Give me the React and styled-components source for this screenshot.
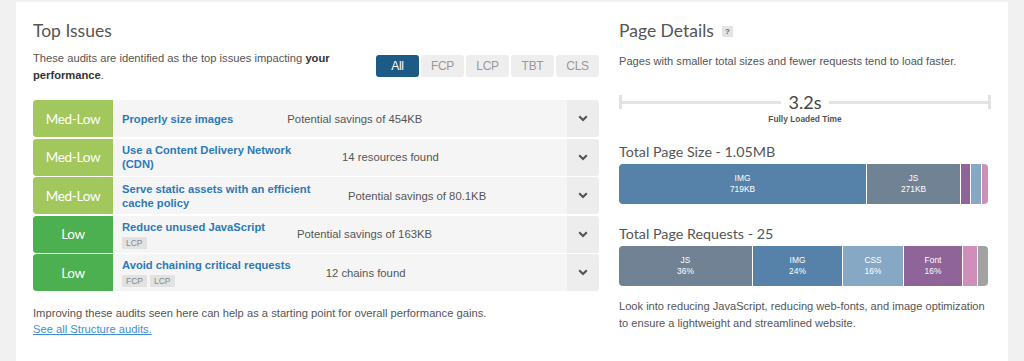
import React from "react";
import styled, { createGlobalStyle } from "styled-components";

const GlobalStyle = createGlobalStyle`
  html, body {
    margin: 0;
    padding: 0;
    background: #f1f1f1;
    font-family: "Liberation Sans", Arial, sans-serif;
  }
`;

const issues = [
  { level: "Med-Low", title: "Properly size images", meta: "Potential savings of 454KB", pad: 54 },
  { level: "Med-Low", title: "Use a Content Delivery Network (CDN)", meta: "14 resources found", pad: 24 },
  { level: "Med-Low", title: "Serve static assets with an efficient cache policy", meta: "Potential savings of 80.1KB", pad: 30 },
  { level: "Low", title: "Reduce unused JavaScript", meta: "Potential savings of 163KB", tags: ["LCP"], pad: 32 },
  { level: "Low", title: "Avoid chaining critical requests", meta: "12 chains found", tags: ["FCP", "LCP"], pad: 35 },
];

const filters = ["All", "FCP", "LCP", "TBT", "CLS"];

const sizeParts = [
  { w: 247, color: "#5681a9", label: "IMG", value: "719KB" },
  { w: 93, color: "#718294", label: "JS", value: "271KB" },
  { w: 9, color: "#8e6499" },
  { w: 10, color: "#87a8c5" },
  { w: 10, color: "#d08fbb" },
];

const requestParts = [
  { w: 133, color: "#718294", label: "JS", value: "36%" },
  { w: 89, color: "#5681a9", label: "IMG", value: "24%" },
  { w: 60, color: "#87a8c5", label: "CSS", value: "16%" },
  { w: 58, color: "#8e6499", label: "Font", value: "16%" },
  { w: 14, color: "#d08fbb" },
  { w: 15, color: "#a2a2a2" },
];

const Chevron = () => (
  <svg width="10" height="7" viewBox="0 0 10 7">
    <path d="M1.2 1.3 L5 5 L8.8 1.3" fill="none" stroke="#555" strokeWidth="2.2" />
  </svg>
);

const StackBar = ({ parts }) => (
  <Bar>
    {parts.map((p, i) => (
      <Segment key={i} color={p.color} style={{ width: p.w }}>
        {p.label && (
          <>
            <span>{p.label}</span>
            <span>{p.value}</span>
          </>
        )}
      </Segment>
    ))}
  </Bar>
);

const App = () => {
  return (
    <>
      <GlobalStyle />
      <Page>
        <Card>
          <LeftCol>
            <Heading>Top Issues</Heading>
            <IntroRow>
              <Intro>
                These audits are identified as the top issues impacting <b>your</b> <b>performance</b>.
              </Intro>
              <Filters>
                {filters.map((f, i) => (
                  <FilterBtn key={f} active={i === 0}>{f}</FilterBtn>
                ))}
              </Filters>
            </IntroRow>
            <IssueList>
              {issues.map((item, index) => (
                <IssueRow key={index}>
                  <Badge level={item.level}>{item.level}</Badge>
                  <IssueBody>
                    <IssueMain>
                      <IssueTitle>{item.title}</IssueTitle>
                      {item.tags && (
                        <Tags>
                          {item.tags.map((t) => (
                            <Tag key={t}>{t}</Tag>
                          ))}
                        </Tags>
                      )}
                    </IssueMain>
                    <IssueMeta pad={item.pad}>{item.meta}</IssueMeta>
                  </IssueBody>
                  <Toggle>
                    <Chevron />
                  </Toggle>
                </IssueRow>
              ))}
            </IssueList>
            <Footnote>
              Improving these audits seen here can help as a starting point for overall performance gains.
              <br />
              <FootLink href="#">See all Structure audits.</FootLink>
            </Footnote>
          </LeftCol>

          <RightCol>
            <Heading>
              Page Details <Help>?</Help>
            </Heading>
            <SideIntro>Pages with smaller total sizes and fewer requests tend to load faster.</SideIntro>
            <Timeline>
              <TimeTrack>
                <TimeLine />
                <TimeValue>3.2s</TimeValue>
                <TimeLine />
              </TimeTrack>
              <TimeLabel>Fully Loaded Time</TimeLabel>
            </Timeline>

            <SubHeading>Total Page Size - 1.05MB</SubHeading>
            <StackBar parts={sizeParts} />

            <SubHeading second>Total Page Requests - 25</SubHeading>
            <StackBar parts={requestParts} />

            <Summary>
              Look into reducing JavaScript, reducing web-fonts, and image optimization to ensure a
              lightweight and streamlined website.
            </Summary>
          </RightCol>
        </Card>
      </Page>
    </>
  );
};

const Page = styled.div`
  width: 1024px;
  height: 361px;
  padding: 2px 16px 0 16px;
  box-sizing: border-box;
  overflow: hidden;
`;

const Card = styled.div`
  background: #fff;
  height: 359px;
  padding: 0 15px 0 17px;
  display: flex;
  gap: 20px;
  box-sizing: border-box;
`;

const LeftCol = styled.div`
  width: 566px;
  flex-shrink: 0;
  display: flex;
  flex-direction: column;
`;

const RightCol = styled.div`
  width: 374px;
  flex-shrink: 0;
  display: flex;
  flex-direction: column;
`;

const Heading = styled.h2`
  margin: 18px 0 0;
  font-family: Lato, "Open Sans", sans-serif;
  font-weight: 400;
  font-size: 17.5px;
  line-height: 22px;
  color: #555;
  display: flex;
  align-items: center;
`;

const Help = styled.span`
  display: inline-block;
  margin-left: 8px;
  width: 11px;
  height: 11px;
  line-height: 11px;
  background: #e4e4e4;
  color: #666;
  font-family: "Liberation Sans", Arial, sans-serif;
  font-size: 8px;
  font-weight: bold;
  text-align: center;
  border-radius: 1px;
`;

const IntroRow = styled.div`
  display: flex;
  justify-content: space-between;
  align-items: flex-start;
  margin-top: 8px;
`;

const Intro = styled.p`
  margin: 0;
  font-size: 11.2px;
  line-height: 16.5px;
  color: #555;
  max-width: 300px;

  b {
    color: #333;
  }
`;

const SideIntro = styled.p`
  margin: 12px 0 0;
  font-size: 11.1px;
  line-height: 15px;
  color: #555;
`;

const Filters = styled.div`
  display: flex;
  gap: 2px;
  margin-top: 5px;
`;

const FilterBtn = styled.button`
  border: none;
  width: 43px;
  height: 22px;
  padding: 0;
  border-radius: 3px;
  font-family: "Liberation Sans", Arial, sans-serif;
  font-size: 12px;
  letter-spacing: -0.3px;
  background: ${(p) => (p.active ? "#1d5a86" : "#eeeeee")};
  color: ${(p) => (p.active ? "#fff" : "#999")};
`;

const IssueList = styled.div`
  display: flex;
  flex-direction: column;
  gap: 1.5px;
  margin-top: 17px;
`;

const IssueRow = styled.div`
  display: flex;
  height: 37px;
  background: #f5f5f5;
  border-radius: 3px;
  overflow: hidden;
`;

const Badge = styled.div`
  width: 80px;
  flex-shrink: 0;
  display: flex;
  align-items: center;
  justify-content: center;
  font-family: Lato, "Open Sans", sans-serif;
  font-size: 13.5px;
  letter-spacing: -0.3px;
  color: #fff;
  border-radius: 3px 0 0 3px;
  background: ${(p) => (p.level === "Low" ? "#4caf50" : "#a1c75d")};
`;

const IssueBody = styled.div`
  flex: 1;
  display: flex;
  align-items: center;
  padding-left: 9px;
`;

const IssueMain = styled.div`
  display: flex;
  flex-direction: column;
  max-width: 196px;
`;

const IssueTitle = styled.a`
  font-size: 11.2px;
  font-weight: bold;
  line-height: 14px;
  color: #2c7ab8;
`;

const Tags = styled.div`
  display: flex;
  gap: 3px;
  margin-top: 3px;
`;

const Tag = styled.span`
  background: #e2e2e2;
  color: #888;
  font-size: 8.5px;
  line-height: 12px;
  padding: 0 4px;
  border-radius: 1px;
`;

const IssueMeta = styled.span`
  margin-left: ${(p) => p.pad}px;
  font-size: 11.3px;
  color: #555;
  white-space: nowrap;
`;

const Toggle = styled.div`
  width: 32px;
  flex-shrink: 0;
  background: #ededed;
  display: flex;
  align-items: center;
  justify-content: center;
`;

const Footnote = styled.p`
  margin: 14px 0 0;
  font-size: 11.2px;
  line-height: 16px;
  color: #555;
`;

const FootLink = styled.a`
  color: #3d8fd0;
  text-decoration: underline;
`;

const Timeline = styled.div`
  margin-top: 26px;
  width: 372px;
  display: flex;
  flex-direction: column;
  align-items: center;
`;

const TimeTrack = styled.div`
  width: 100%;
  display: flex;
  align-items: center;
  gap: 8px;
  border-left: 3px solid #e2e2e2;
  border-right: 3px solid #e2e2e2;
  box-sizing: border-box;
  height: 14px;
`;

const TimeLine = styled.div`
  flex: 1;
  height: 3px;
  background: #e4e4e4;
`;

const TimeValue = styled.span`
  font-family: Lato, "Open Sans", sans-serif;
  font-size: 18px;
  line-height: 14px;
  color: #444;
`;

const TimeLabel = styled.span`
  margin-top: 5px;
  font-size: 8.4px;
  font-weight: bold;
  color: #555;
`;

const SubHeading = styled.h3`
  margin: ${(p) => (p.second ? "21px" : "19px")} 0 4px;
  font-family: Lato, "Open Sans", sans-serif;
  font-weight: 400;
  font-size: 14.3px;
  line-height: 17px;
  color: #555;
`;

const Bar = styled.div`
  display: flex;
  height: 40px;
  width: 369px;
  border-radius: 4px;
  overflow: hidden;
  gap: 1px;
`;

const Segment = styled.div`
  flex-shrink: 0;
  background: ${(p) => p.color};
  display: flex;
  flex-direction: column;
  align-items: center;
  justify-content: center;
  color: #fff;
  font-size: 8.4px;
  line-height: 11px;
`;

const Summary = styled.p`
  margin: 12px 0 0;
  font-size: 11.1px;
  line-height: 17px;
  color: #555;
`;

export default App;
